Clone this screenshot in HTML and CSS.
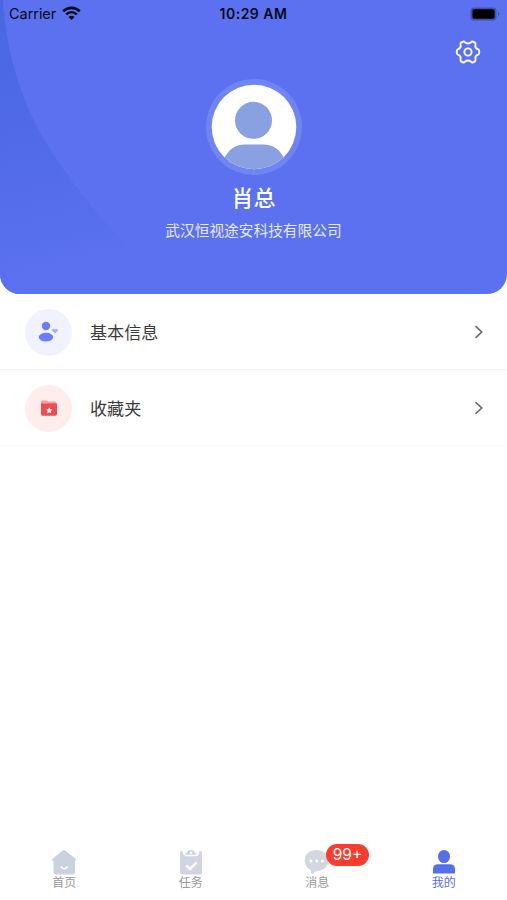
FILE: index.html
```html
<!DOCTYPE html>
<html lang="zh-CN">
<head>
<meta charset="utf-8">
<title>我的</title>
<link rel="stylesheet" href="styles.css">
</head>
<body>
<div class="app">
  <header class="hero">
    <svg class="hero-arc" viewBox="0 0 200 294" aria-hidden="true">
      <defs><linearGradient id="arc" x1="0" y1="0" x2=".15" y2="1"><stop offset="0" stop-color="#4a67e2"/><stop offset=".4" stop-color="#4f69e7"/><stop offset=".95" stop-color="#5b71ef"/></linearGradient></defs>
      <path d="M0 0H3C7 60 24 109 52 152C79 195 119 243 168 278L180 294H0Z" fill="url(#arc)"/>
    </svg>
    <div class="status">
      <div class="carrier"><span>Carrier</span>
        <svg width="19" height="15" viewBox="0 0 19 15" fill="none" stroke="#080b18" stroke-width="2.6"><path d="M1.200 5.300C6 .7 13 .7 17.800 5.300M4.200 8.400C7.300 5.500 11.700 5.500 14.800 8.400"/><path d="M9.500 14L6.500 11C8.200 9.400 10.800 9.400 12.500 11Z" fill="#080b18" stroke="none"/></svg>
      </div>
      <time>10:29 AM</time>
      <svg class="battery" width="31" height="14" viewBox="0 0 31 14"><rect x=".5" y=".5" width="26" height="13" rx="3.500" fill="#4052ab"/><rect x="2.500" y="2.300" width="22" height="9.400" rx="1.800" fill="#000"/><path d="M28 4.500q3 2.500 0 5z" fill="#4052ab"/></svg>
    </div>
    <div class="tools">
      <svg width="26" height="24" viewBox="0 0 26 24" fill="none" stroke="#fff" stroke-width="1.900" stroke-linejoin="round"><path d="M8 1.600Q9 1.200 9.900 2.300Q13 4.600 16.100 2.300Q17 1.200 18 1.600L20 2.700Q20.900 3.300 20.400 4.700Q19.800 8.400 23.300 9.300Q24.300 9.700 24.300 12Q24.300 14.300 23.300 14.700Q19.800 15.600 20.400 19.300Q20.900 20.700 20 21.300L18 22.400Q17 22.800 16.100 21.700Q13 19.400 9.900 21.700Q9 22.800 8 22.400L6 21.300Q5.100 20.700 5.600 19.300Q6.200 15.600 2.700 14.700Q1.700 14.300 1.700 12Q1.700 9.700 2.700 9.300Q6.200 8.400 5.600 4.700Q5.100 3.300 6 2.700Z"/><circle cx="13" cy="12" r="3.600"/></svg>
    </div>
    <div class="profile">
      <svg class="avatar" width="96" height="96" viewBox="0 0 96 96"><defs><clipPath id="face"><circle cx="48" cy="48" r="42.300"/></clipPath></defs><circle cx="48" cy="48" r="48" fill="#7085f2"/><circle cx="48" cy="48" r="42.300" fill="#fff"/><g fill="#8aa1e1" clip-path="url(#face)"><circle cx="47.500" cy="41.300" r="18.500"/><path d="M17 81C23 70 29 65.500 39 65.500H57C67 65.500 74 70 79 81V96H17Z"/></g></svg>
      <h1>肖总</h1>
      <p>武汉恒视途安科技有限公司</p>
    </div>
  </header>

  <main>
    <a class="row">
      <span class="bubble blue"><svg width="24" height="24" viewBox="0 0 24 24" fill="#6b7cf8"><circle cx="9" cy="6" r="4.200"/><ellipse cx="9" cy="17.100" rx="7.200" ry="4.300"/><path d="M18 13.500L15.300 10.900C14 9.300 16.400 7.800 18 9.500C19.600 7.800 22 9.300 20.700 10.900Z" fill="#a5affb"/></svg></span>
      <span class="label">基本信息</span>
      <svg class="chevron" width="10" height="14" viewBox="0 0 10 14"><path d="M1.500 1.200L7.700 7L1.500 12.800"/></svg>
    </a>
    <a class="row">
      <span class="bubble red"><svg width="24" height="24" viewBox="0 0 24 24"><path d="M4 8V5.500Q4 4.500 5 4.500H10L11.500 5.400H18Q19.500 5.500 19.500 8Z" fill="#f59d9f"/><path d="M4 7.500H20V17.800Q20 19.700 18.300 19.700H5.700Q4 19.700 4 17.800Z" fill="#ed4c50"/><path d="M12.200 11.200L13.200 13.200L15.300 13.500L13.800 15L14.100 17.200L12.200 16.200L10.300 17.200L10.600 15L9.100 13.500L11.200 13.200Z" fill="#fff"/></svg></span>
      <span class="label">收藏夹</span>
      <svg class="chevron" width="10" height="14" viewBox="0 0 10 14"><path d="M1.500 1.200L7.700 7L1.500 12.800"/></svg>
    </a>
  </main>

  <nav class="tabs">
    <a class="tab"><svg width="28" height="26" viewBox="0 0 28 26"><path d="M14 1Q14.800 1 16 2L26 10.300Q27 11.500 25.500 11.700H25V23Q25 25.500 22.500 25.500H6Q3.500 25.500 3.500 23V11.700H2.500Q1 11.500 2 10.300L12 2Q13.200 1 14 1Z" fill="#cbd1df"/><path d="M11.300 18.200Q14.200 21.300 17.200 18.200" fill="none" stroke="#fff" stroke-width="1.700" stroke-linecap="round"/></svg><span>首页</span></a>
    <a class="tab"><svg width="28" height="26" viewBox="0 0 28 26"><path d="M3 3.500Q3 2.300 4.200 2.300H5.700Q6 7.300 9.500 7.300H18.500Q22 7.300 22.300 2.300H23.800Q25 2.300 25 3.500V23.500Q25 25.500 23 25.500H5Q3 25.500 3 23.500Z" fill="#d0d5e1"/><path d="M8.500 5.700V4.200H10Q10.500 1 14 1Q17.500 1 18 4.200H19.500V5.700Z" fill="#cbd1df"/><circle cx="14" cy="3.900" r="1.300" fill="#fff"/><path d="M9.200 16.500L13 20L19.500 13.700" fill="none" stroke="#fff" stroke-width="2.400"/></svg><span>任务</span></a>
    <a class="tab"><svg width="28" height="26" viewBox="0 0 28 26"><path d="M13.500 1C20.500 1 25.500 5.500 25.500 11.600C25.500 18 20 22 13 22.200L9.500 24.800Q8 25.500 8 23.800V21.200C4 19.200 1.700 16 1.700 11.600C1.700 5.500 6.500 1 13.500 1Z" fill="#d3d7e0"/><g fill="#fff"><circle cx="8" cy="12" r="1.500"/><circle cx="13.700" cy="12" r="1.500"/><circle cx="19.400" cy="12" r="1.500"/></g></svg><span>消息</span><b class="badge">99+</b></a>
    <a class="tab active"><svg width="28" height="26" viewBox="0 0 28 26" fill="#546fea"><ellipse cx="14" cy="7.500" rx="6" ry="6.600"/><path d="M3 24.500V20Q3 15.300 8 15.300H20Q25 15.300 25 20V24.500Z"/></svg><span>我的</span></a>
  </nav>
</div>
</body>
</html>
```
FILE: styles.css
```css
* { box-sizing: border-box; }

body {
  margin: 0;
  background: #fff;
  font-family: Inter, "Noto Sans CJK SC", sans-serif;
}

.app {
  display: flex;
  flex-direction: column;
  height: 900px;
  overflow: hidden;
}

.hero {
  position: relative;
  height: 294px;
  flex: none;
  overflow: hidden;
  border-radius: 0 0 20px 20px;
  background: #5b71ef;
}

.hero-arc {
  position: absolute;
  top: 0;
  left: 0;
  width: 200px;
  height: 294px;
}

.status {
  position: relative;
  display: grid;
  grid-template-columns: 1fr auto 1fr;
  align-items: center;
  height: 27px;
  padding: 0 6px 0 9px;
  color: #080b18;
  font-size: 14.5px;
}

.carrier {
  display: flex;
  align-items: center;
  gap: 6px;
}

.carrier span { letter-spacing: -0.05px; }

.status time {
  margin-right: 3px;
  font-size: 14px;
  font-weight: 600;
  letter-spacing: 0.5px;
}

.battery { justify-self: end; }

.tools {
  position: relative;
  display: flex;
  justify-content: flex-end;
  padding: 13px 26px 0 0;
}

.tools svg { display: block; }

.profile {
  position: relative;
  display: flex;
  flex-direction: column;
  align-items: center;
  margin-top: 15px;
  color: #fff;
}

.avatar { display: block; }

.profile h1 {
  margin: 7px 0 0;
  font-size: 22px;
  line-height: 32px;
  font-weight: 500;
}

.profile p {
  margin: 6px 0 0;
  color: #e6eaff;
  font-size: 14.7px;
  line-height: 22px;
}

.row {
  display: flex;
  align-items: center;
  height: 76px;
  padding: 1px 23px 0 25px;
  border-bottom: 1px solid #f4f4f5;
}

.row:last-child { border-bottom-color: #fbfbfc; }

.bubble {
  display: grid;
  place-items: center;
  width: 47px;
  height: 47px;
  border-radius: 50%;
}

.blue { background: #f0f3ff; }
.red { background: #ffeced; }

.label {
  flex: 1;
  margin-left: 18px;
  padding-bottom: 2px;
  color: #3a3a3a;
  font-size: 17.1px;
}

.chevron {
  fill: none;
  stroke: #6c6c6c;
  stroke-width: 1.7;
}

.tabs {
  display: grid;
  grid-template-columns: repeat(4, 1fr);
  height: 51px;
  margin-top: auto;
  padding-left: 1px;
}

.tab {
  position: relative;
  display: flex;
  flex-direction: column;
  align-items: center;
  color: #999;
  font-size: 12px;
  line-height: 16px;
}

.tab svg { display: block; }

.active { color: #546fea; }

.badge {
  position: absolute;
  top: -5px;
  left: 72px;
  width: 43px;
  height: 22px;
  border-radius: 11px;
  background: #fc3b30;
  color: #fff;
  font-size: 15.5px;
  font-weight: 400;
  line-height: 22px;
  text-align: center;
}
```
